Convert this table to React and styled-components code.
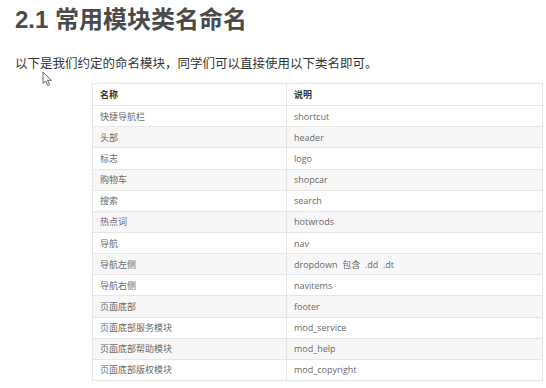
import React from 'react'
import styled, { createGlobalStyle } from 'styled-components'

const GlobalStyle = createGlobalStyle`
    html, body {
        margin: 0;
        padding: 0;
        background: #ffffff;
    }
    body {
        font-family: "Liberation Sans", "Noto Sans CJK SC", sans-serif;
    }
`

const Page = styled.div`
    position: relative;
    width: 546px;
    height: 388px;
    padding: 5px 0 0 15px;
    box-sizing: border-box;
    overflow: hidden;
`

const Title = styled.h2`
    margin: 0;
    font-family: "Liberation Sans", "Noto Sans CJK SC", sans-serif;
    font-size: 24px;
    line-height: 30px;
    font-weight: 700;
    color: #4a4a4a;
`

const Intro = styled.p`
    margin: 19px 0 0 0;
    font-size: 12.5px;
    line-height: 20px;
    color: #333333;
`

const Table = styled.div`
    margin: 9px 0 0 77px;
    width: 451px;
    border: 1px solid #e6e6e6;
    box-sizing: border-box;
`

const Row = styled.div`
    display: grid;
    grid-template-columns: 194px 1fr;
    height: 21.15px;
    box-sizing: border-box;
    border-top: ${p => (p.$first ? 'none' : '1px solid #e6e6e6')};
    background: ${p => (p.$striped ? '#f7f7f7' : '#ffffff')};
`

const Cell = styled.div`
    display: flex;
    align-items: center;
    padding-left: 7px;
    font-family: "Open Sans", "Noto Sans CJK SC", sans-serif;
    font-size: 9px;
    font-weight: ${p => (p.$head ? 700 : 400)};
    color: ${p => (p.$head ? '#333333' : '#6a6a6a')};
    white-space: pre;
    border-right: ${p => (p.$left ? '1px solid #e6e6e6' : 'none')};
`

const Cursor = styled.svg`
    position: absolute;
    left: 42px;
    top: 71px;
`

const rows = [
    ['快捷导航栏', 'shortcut'],
    ['头部', 'header'],
    ['标志', 'logo'],
    ['购物车', 'shopcar'],
    ['搜索', 'search'],
    ['热点词', 'hotwrods'],
    ['导航', 'nav'],
    ['导航左侧', 'dropdown  包含  .dd  .dt'],
    ['导航右侧', 'navitems'],
    ['页面底部', 'footer'],
    ['页面底部服务模块', 'mod_service'],
    ['页面底部帮助模块', 'mod_help'],
    ['页面底部版权模块', 'mod_copyright'],
]

export default function App() {
    return (
        <>
            <GlobalStyle />
            <Page>
                <Title>2.1 常用模块类名命名</Title>
                <Intro>以下是我们约定的命名模块，同学们可以直接使用以下类名即可。</Intro>
                <Table>
                    <Row $first>
                        <Cell $head $left>名称</Cell>
                        <Cell $head>说明</Cell>
                    </Row>
                    {rows.map(([name, desc], i) => (
                        <Row key={name} $striped={i % 2 === 1}>
                            <Cell $left>{name}</Cell>
                            <Cell>{desc}</Cell>
                        </Row>
                    ))}
                </Table>
                <Cursor width="12" height="16" viewBox="0 0 12 16">
                    <path
                        d="M1 1 L1 12.5 L3.8 10 L5.8 14.6 L7.6 13.8 L5.6 9.3 L9.4 9.3 Z"
                        fill="#ffffff"
                        stroke="#555555"
                        strokeWidth="0.9"
                        strokeLinejoin="round"
                    />
                </Cursor>
            </Page>
        </>
    )
}
